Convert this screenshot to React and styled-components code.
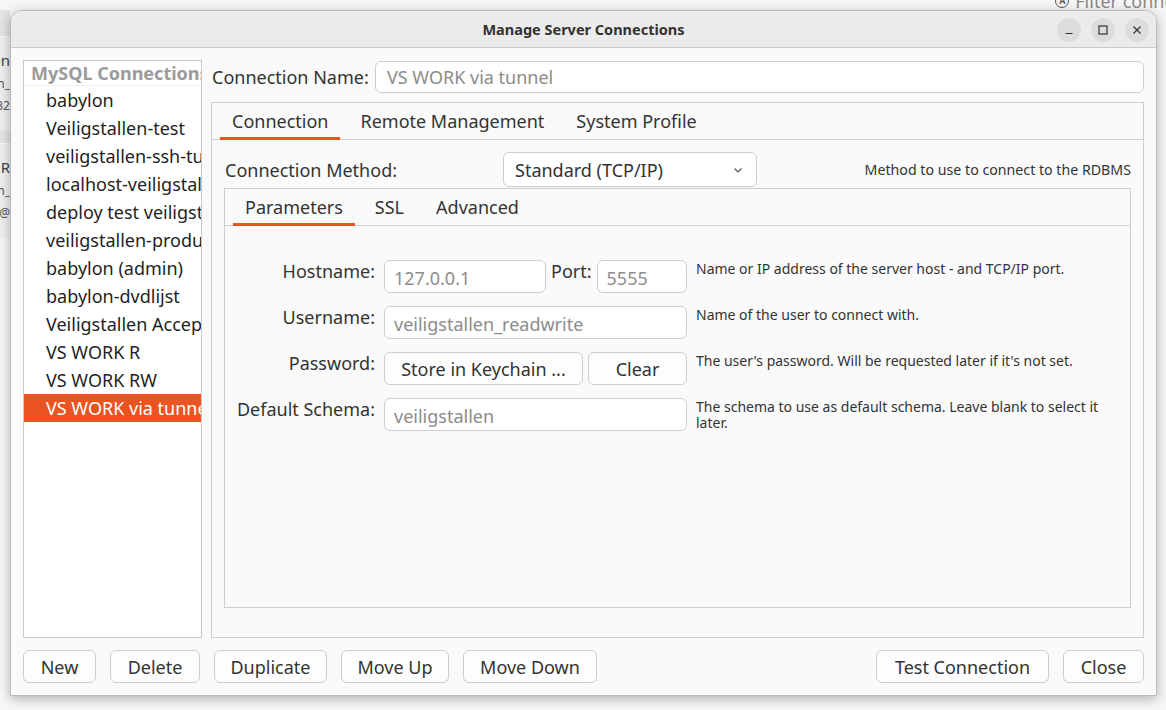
import React from "react";
import styled, { createGlobalStyle } from "styled-components";

const GlobalStyle = createGlobalStyle`
    html, body {
        margin: 0;
        padding: 0;
        background: #f4f4f4;
        font-family: "Noto Sans", "Open Sans", sans-serif;
        color: #333;
    }
    * {
        box-sizing: border-box;
    }
`;

const connections = [
    "babylon",
    "Veiligstallen-test",
    "veiligstallen-ssh-tunnel",
    "localhost-veiligstallen",
    "deploy test veiligstallen",
    "veiligstallen-productie",
    "babylon (admin)",
    "babylon-dvdlijst",
    "Veiligstallen Acceptatie",
    "VS WORK R",
    "VS WORK RW",
    "VS WORK via tunnel",
];

const backdropTiles = [
    { title: "Open", lines: ["admin_", "1232"] },
    { title: "VS WORK R", lines: ["readon_", "admin@"] },
];

const ChevronDown = () => (
    <svg width="12" height="12" viewBox="0 0 12 12">
        <path d="M2.5 4.5 L6 8 L9.5 4.5" fill="none" stroke="#555" strokeWidth="1.1" />
    </svg>
);

const MinimizeIcon = () => (
    <svg width="12" height="12" viewBox="0 0 12 12">
        <path d="M2.5 9.5 H9.5" stroke="#333" strokeWidth="1.2" />
    </svg>
);

const MaximizeIcon = () => (
    <svg width="12" height="12" viewBox="0 0 12 12">
        <rect x="2" y="2" width="8" height="8" fill="none" stroke="#333" strokeWidth="1.2" />
    </svg>
);

const CloseIcon = () => (
    <svg width="12" height="12" viewBox="0 0 12 12">
        <path d="M2.5 2.5 L9.5 9.5 M9.5 2.5 L2.5 9.5" stroke="#333" strokeWidth="1.2" />
    </svg>
);

const App = () => {
    return (
        <>
            <GlobalStyle />
            <Desktop>
                <BackdropTop>
                    <FilterHint>
                        <FilterBadge>A</FilterBadge>
                        Filter connections
                    </FilterHint>
                </BackdropTop>
                <BackdropSide>
                    {backdropTiles.map((tile) => (
                        <BackdropTile key={tile.title}>
                            <BackdropTitle>
                                <span>{tile.title}</span>
                            </BackdropTitle>
                            {tile.lines.map((line) => (
                                <BackdropLine key={line}>
                                    <span>{line}</span>
                                </BackdropLine>
                            ))}
                        </BackdropTile>
                    ))}
                </BackdropSide>

                <Window>
                    <TitleBar>
                        <Title>Manage Server Connections</Title>
                        <WindowControls>
                            <ControlButton>
                                <MinimizeIcon />
                            </ControlButton>
                            <ControlButton>
                                <MaximizeIcon />
                            </ControlButton>
                            <ControlButton>
                                <CloseIcon />
                            </ControlButton>
                        </WindowControls>
                    </TitleBar>

                    <Body>
                        <Main>
                            <ConnectionList>
                                <ListHeader>MySQL Connections</ListHeader>
                                {connections.map((name, i) => (
                                    <ListItem
                                        key={name}
                                        selected={i === connections.length - 1}
                                    >
                                        {name}
                                    </ListItem>
                                ))}
                            </ConnectionList>

                            <RightPanel>
                                <NameRow>
                                    <NameLabel>Connection Name:</NameLabel>
                                    <NameField>VS WORK via tunnel</NameField>
                                </NameRow>

                                <TabFrame>
                                    <TabBar>
                                        <Tab active>Connection</Tab>
                                        <Tab>Remote Management</Tab>
                                        <Tab>System Profile</Tab>
                                    </TabBar>
                                    <TabContent>
                                        <MethodRow>
                                            <MethodLabel>Connection Method:</MethodLabel>
                                            <Combo>
                                                <span>Standard (TCP/IP)</span>
                                                <ChevronDown />
                                            </Combo>
                                            <HelpRight>
                                                Method to use to connect to the RDBMS
                                            </HelpRight>
                                        </MethodRow>

                                        <InnerFrame>
                                            <TabBar>
                                                <Tab active>Parameters</Tab>
                                                <Tab>SSL</Tab>
                                                <Tab>Advanced</Tab>
                                            </TabBar>
                                            <FormGrid>
                                                <FieldLabel>Hostname:</FieldLabel>
                                                <FieldGroup>
                                                    <TextField width="162px">127.0.0.1</TextField>
                                                    <PortLabel>Port:</PortLabel>
                                                    <TextField grow>5555</TextField>
                                                </FieldGroup>
                                                <Help>
                                                    Name or IP address of the server host - and
                                                    TCP/IP port.
                                                </Help>

                                                <FieldLabel>Username:</FieldLabel>
                                                <TextField>veiligstallen_readwrite</TextField>
                                                <Help>Name of the user to connect with.</Help>

                                                <FieldLabel>Password:</FieldLabel>
                                                <FieldGroup>
                                                    <Button width="199px">
                                                        Store in Keychain ...
                                                    </Button>
                                                    <Button grow>Clear</Button>
                                                </FieldGroup>
                                                <Help>
                                                    The user's password. Will be requested later
                                                    if it's not set.
                                                </Help>

                                                <FieldLabel>Default Schema:</FieldLabel>
                                                <TextField>veiligstallen</TextField>
                                                <Help>
                                                    The schema to use as default schema. Leave
                                                    blank to select it
                                                    <br />
                                                    later.
                                                </Help>
                                            </FormGrid>
                                        </InnerFrame>
                                    </TabContent>
                                </TabFrame>
                            </RightPanel>
                        </Main>

                        <ButtonBar>
                            <Button width="73px">New</Button>
                            <Button width="90px">Delete</Button>
                            <Button width="113px">Duplicate</Button>
                            <Button width="108px">Move Up</Button>
                            <Button width="134px">Move Down</Button>
                            <Spacer />
                            <Button width="173px">Test Connection</Button>
                            <Button width="81px">Close</Button>
                        </ButtonBar>
                    </Body>
                </Window>
            </Desktop>
        </>
    );
};

export default App;

const Desktop = styled.div`
    position: relative;
    width: 1166px;
    height: 710px;
    overflow: hidden;
    background: #f6f6f6;
`;

const BackdropTop = styled.div`
    height: 10px;
    display: flex;
    justify-content: flex-end;
    overflow: visible;
`;

const FilterHint = styled.div`
    display: flex;
    align-items: center;
    gap: 6px;
    margin-top: -9px;
    margin-right: -59px;
    font-size: 18px;
    color: #8a8a8a;
    white-space: nowrap;
`;

const FilterBadge = styled.span`
    width: 14px;
    height: 14px;
    border: 1.5px solid #555;
    border-radius: 50%;
    font-size: 9px;
    font-weight: 700;
    color: #555;
    display: flex;
    align-items: center;
    justify-content: center;
`;

const BackdropSide = styled.div`
    width: 40px;
    margin-left: -30px;
    padding-top: 26px;
    display: flex;
    flex-direction: column;
    gap: 12px;
    background: linear-gradient(90deg, #ececec, #e2e2e2);
`;

const BackdropTile = styled.div`
    display: flex;
    flex-direction: column;
    padding: 10px 0 14px;
    background: #eeeeee;
    border-top: 1px solid #f8f8f8;
`;

const BackdropTitle = styled.div`
    display: flex;
    justify-content: flex-end;
    width: 40px;
    font-size: 15px;
    color: #444;
    white-space: nowrap;
    line-height: 26px;
`;

const BackdropLine = styled.div`
    display: flex;
    justify-content: flex-end;
    width: 40px;
    font-size: 12px;
    color: #555;
    white-space: nowrap;
    line-height: 22px;
`;

const Window = styled.div`
    position: absolute;
    left: 10px;
    top: 10px;
    width: 1147px;
    height: 686px;
    display: flex;
    flex-direction: column;
    background: #fafafa;
    border: 1px solid #b9b9b9;
    border-radius: 12px 12px 0 0;
    box-shadow: 0 3px 12px rgba(0, 0, 0, 0.28);
    overflow: hidden;
`;

const TitleBar = styled.div`
    position: relative;
    height: 37px;
    flex-shrink: 0;
    display: flex;
    align-items: center;
    justify-content: center;
    background: #ebebeb;
    border-bottom: 1px solid #cbcbcb;
`;

const Title = styled.div`
    font-size: 14.5px;
    font-weight: 700;
    color: #333;
`;

const WindowControls = styled.div`
    position: absolute;
    right: 7px;
    top: 7px;
    display: flex;
    gap: 10px;
`;

const ControlButton = styled.div`
    width: 24px;
    height: 24px;
    border-radius: 50%;
    background: #dcdcdc;
    display: flex;
    align-items: center;
    justify-content: center;
`;

const Body = styled.div`
    flex: 1;
    display: flex;
    flex-direction: column;
    gap: 12px;
    padding: 12px;
    min-height: 0;
`;

const Main = styled.div`
    flex: 1;
    display: flex;
    gap: 9px;
    min-height: 0;
`;

const ConnectionList = styled.div`
    width: 179px;
    flex-shrink: 0;
    background: #fff;
    border: 1px solid #c9c9c9;
    overflow: hidden;
`;

const ListHeader = styled.div`
    height: 25px;
    padding-left: 7px;
    line-height: 25px;
    font-size: 18px;
    font-weight: 700;
    color: #9b9b9b;
    white-space: nowrap;
    border-bottom: 1px solid #f0f0f0;
`;

const ListItem = styled.div`
    height: 28px;
    padding-left: 22px;
    line-height: 28px;
    font-size: 18px;
    white-space: nowrap;
    color: ${(props) => (props.selected ? "#ffffff" : "#1f1f1f")};
    background: ${(props) => (props.selected ? "#e95420" : "transparent")};
`;

const RightPanel = styled.div`
    flex: 1;
    display: flex;
    flex-direction: column;
    min-width: 0;
`;

const NameRow = styled.div`
    display: flex;
    align-items: center;
    height: 32px;
    margin-top: 1px;
`;

const NameLabel = styled.div`
    width: 164px;
    padding-left: 1px;
    font-size: 18px;
    color: #333;
    white-space: nowrap;
`;

const TextField = styled.div`
    height: 33px;
    ${(props) => (props.grow ? "flex: 1;" : "")}
    width: ${(props) => props.width || "auto"};
    flex-shrink: 0;
    padding: 6px 9px 0;
    line-height: 22px;
    font-size: 18px;
    color: #8c8c8c;
    background: #ffffff;
    border: 1px solid #cdcdcd;
    border-radius: 6px;
    white-space: nowrap;
    overflow: hidden;
`;

const NameField = styled(TextField)`
    flex: 1;
    height: 32px;
    padding: 3px 11px 0;
    line-height: 24px;
`;

const TabFrame = styled.div`
    flex: 1;
    margin-top: 9px;
    display: flex;
    flex-direction: column;
    border: 1px solid #cfcfcf;
    min-height: 0;
`;

const TabBar = styled.div`
    height: 37px;
    flex-shrink: 0;
    display: flex;
    gap: 8px;
    padding-left: 8px;
    border-bottom: 1px solid #d4d4d4;
`;

const Tab = styled.div`
    position: relative;
    display: flex;
    align-items: center;
    padding: 0 12px;
    font-size: 18px;
    color: #333;
    white-space: nowrap;
    &::after {
        content: "";
        position: absolute;
        left: 0;
        right: 0;
        bottom: -1px;
        height: 3px;
        background: ${(props) => (props.active ? "#e95420" : "transparent")};
    }
`;

const TabContent = styled.div`
    flex: 1;
    display: flex;
    flex-direction: column;
    padding: 12px 12px 29px 12px;
    min-height: 0;
`;

const MethodRow = styled.div`
    display: flex;
    align-items: center;
    height: 35px;
    flex-shrink: 0;
`;

const MethodLabel = styled.div`
    width: 279px;
    padding-left: 1px;
    font-size: 18px;
    color: #333;
    white-space: nowrap;
`;

const Combo = styled.div`
    width: 254px;
    height: 35px;
    display: flex;
    align-items: center;
    justify-content: space-between;
    padding: 0 12px 0 11px;
    font-size: 18px;
    color: #333;
    background: #fff;
    border: 1px solid #cdcdcd;
    border-radius: 6px;
`;

const HelpRight = styled.div`
    margin-left: auto;
    font-size: 14.2px;
    color: #333;
    white-space: nowrap;
`;

const InnerFrame = styled.div`
    flex: 1;
    margin-top: 1px;
    display: flex;
    flex-direction: column;
    border: 1px solid #cfcfcf;
    min-height: 0;
`;

const FormGrid = styled.div`
    display: grid;
    grid-template-columns: 150px 303px 1fr;
    grid-auto-rows: 33px;
    column-gap: 9px;
    row-gap: 13px;
    padding-top: 34px;
`;

const FieldLabel = styled.div`
    text-align: right;
    line-height: 22px;
    font-size: 18px;
    color: #333;
    white-space: nowrap;
`;

const FieldGroup = styled.div`
    display: flex;
    align-items: flex-start;
    gap: 5px;
`;

const PortLabel = styled.div`
    line-height: 22px;
    font-size: 18px;
    color: #333;
`;

const Help = styled.div`
    padding-top: 1px;
    font-size: 14px;
    line-height: 16px;
    color: #333;
    white-space: nowrap;
`;

const Button = styled.div`
    height: 33px;
    ${(props) => (props.grow ? "flex: 1;" : "")}
    width: ${(props) => props.width || "auto"};
    flex-shrink: 0;
    display: flex;
    align-items: center;
    justify-content: center;
    font-size: 18px;
    color: #333;
    background: #fdfdfd;
    border: 1px solid #cdcdcd;
    border-radius: 6px;
    white-space: nowrap;
`;

const ButtonBar = styled.div`
    display: flex;
    gap: 14px;
    height: 33px;
    flex-shrink: 0;
`;

const Spacer = styled.div`
    flex: 1;
`;
